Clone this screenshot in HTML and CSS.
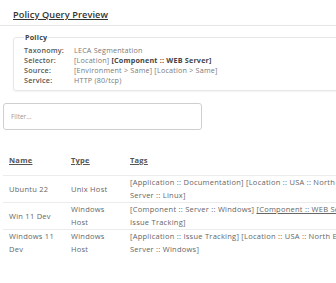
FILE: index.html
```html
<!DOCTYPE html>
<html>
<head>
<meta charset="utf-8">
<link rel="stylesheet" href="styles.css">
</head>
<body>
<div class="page">
  <div class="header">
    <h1 class="title">Policy Query Preview</h1>
  </div>
  <fieldset class="policy">
    <legend class="legend">Policy</legend>
    <div class="grid">
      <div class="label">Taxonomy:</div><div class="value">LECA Segmentation</div>
      <div class="label">Selector:</div><div class="value">[Location] <b class="strong">[Component :: WEB Server]</b></div>
      <div class="label">Source:</div><div class="value">[Environment &gt; Same] [Location &gt; Same]</div>
      <div class="label">Service:</div><div class="value">HTTP (80/tcp)</div>
    </div>
  </fieldset>
  <div class="filter-wrap">
    <input class="filter" type="text" placeholder="Filter...">
  </div>
  <table class="tbl">
    <colgroup>
      <col class="c-name"><col class="c-type"><col class="c-tags">
    </colgroup>
    <thead>
      <tr><th><span class="u">Name</span></th><th><span class="u">Type</span></th><th><span class="u">Tags</span></th></tr>
    </thead>
    <tbody>
      <tr><td>Ubuntu 22</td><td>Unix Host</td><td>[Application :: Documentation] [Location :: USA :: North East] [Component :: Server :: Linux]</td></tr>
      <tr><td>Win 11 Dev</td><td>Windows Host</td><td>[Component :: Server :: Windows] <span class="u">[Component :: WEB Server]</span> [Application :: Issue Tracking]</td></tr>
      <tr><td>Windows 11 Dev</td><td>Windows Host</td><td>[Application :: Issue Tracking] [Location :: USA :: North East] [Component :: Server :: Windows]</td></tr>
    </tbody>
  </table>
</div>
</body>
</html>
```
FILE: styles.css
```css
html, body {
  margin: 0;
  padding: 0;
  background: #fff;
}
body {
  font-family: "Open Sans", "Liberation Sans", sans-serif;
  color: #555;
  overflow: hidden;
  letter-spacing: 0.2px;
}
.page {
  width: 600px;
}
.header {
  padding: 8px 13px 4px;
  border-bottom: 1px solid #e6e6e6;
  width: 323px;
}
.title {
  margin: 0;
  font-size: 9.2px;
  font-weight: 600;
  color: #333;
  text-decoration: underline;
  line-height: 13px;
  letter-spacing: 0.1px;
}
.policy {
  margin: 6px 0 0 13px;
  padding: 3px 10px 5px 10px;
  border: 1px solid #e8e8e8;
  border-radius: 3px;
  width: 400px;
  box-shadow: 0 1px 2px rgba(0,0,0,0.05);
}
.legend {
  font-size: 7.2px;
  font-weight: 700;
  color: #444;
  padding: 0 1px;
}
.grid {
  display: grid;
  grid-template-columns: 50px 1fr;
  font-size: 7.2px;
  line-height: 10px;
}
.label {
  color: #555;
  font-weight: 600;
}
.value {
  color: #7a7a7a;
}
.strong {
  color: #444;
  font-weight: 700;
}
.filter-wrap {
  padding: 11px 0 0 3px;
}
.filter {
  box-sizing: border-box;
  width: 199px;
  height: 27px;
  border: 1px solid #cfcfcf;
  border-radius: 3px;
  padding: 0 7px;
  font-family: "Open Sans", "Liberation Sans", sans-serif;
  font-size: 6.5px;
  color: #555;
  outline: none;
}
.filter::placeholder {
  color: #999;
}
.tbl {
  margin: 23px 0 0 3px;
  border-collapse: collapse;
  table-layout: fixed;
  font-size: 7.5px;
  line-height: 13px;
  width: 421px;
  letter-spacing: 0.25px;
}
.c-name { width: 62px; }
.c-type { width: 59px; }
.c-tags { width: 300px; }
.tbl th {
  text-align: left;
  font-weight: 700;
  color: #555;
  padding: 1px 6px 8px;
  border-bottom: 1px solid #ececec;
}
.tbl td {
  vertical-align: middle;
  padding: 0 6px;
  height: 26px;
  border-bottom: 1px solid #ececec;
  color: #666;
}
.tbl tbody tr:last-child td {
  border-bottom: none;
}
.u { text-decoration: underline; }
```
